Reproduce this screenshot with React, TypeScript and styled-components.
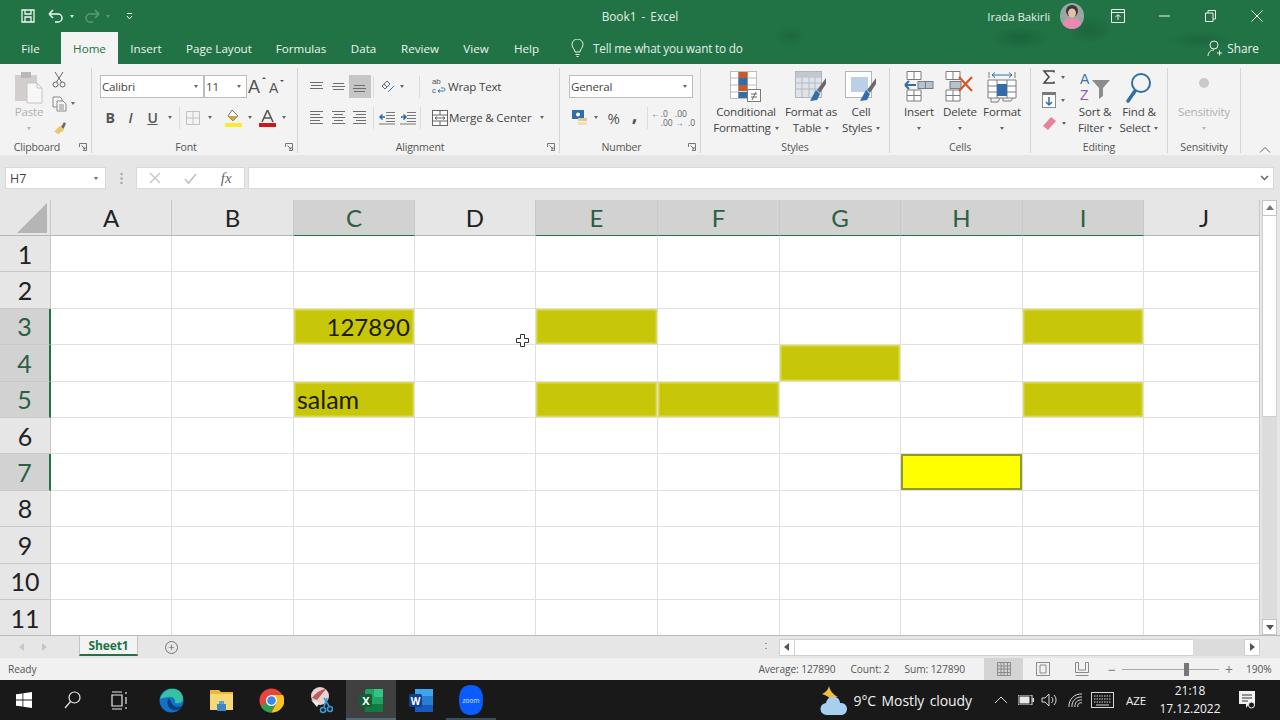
import React from 'react';
import styled, { createGlobalStyle } from 'styled-components';

const ui = `"Open Sans", "Noto Sans", sans-serif`;

const GlobalStyle = createGlobalStyle`
  html, body {
    margin: 0;
    padding: 0;
    background: #e6e6e6;
    font-family: ${ui};
  }
  * { box-sizing: border-box; }
`;

const Window = styled.div`
  width: 1280px;
  height: 720px;
  overflow: hidden;
  display: flex;
  flex-direction: column;
`;

// Title bar and tabs
const Head = styled.header`
  height: 64px;
  flex: none;
  background-color: #217346;
  background-image:
    radial-gradient(ellipse 30px 12px at 1020px 38px, rgba(20, 80, 45, .45), transparent),
    radial-gradient(ellipse 24px 14px at 1090px 30px, rgba(20, 80, 45, .4), transparent),
    radial-gradient(ellipse 34px 10px at 1200px 40px, rgba(20, 80, 45, .35), transparent),
    radial-gradient(ellipse 18px 12px at 790px 36px, rgba(20, 80, 45, .3), transparent);
`;

const TitleRow = styled.div`
  height: 32px;
  display: grid;
  grid-template-columns: 1fr auto 1fr;
  align-items: center;
  color: #e4eee8;
`;

const Qat = styled.div`
  display: flex;
  align-items: center;
  padding-left: 20px;
`;

const DocTitle = styled.div`
  font-size: 11.8px;
  word-spacing: 2px;
`;

const Account = styled.div`
  display: flex;
  align-items: center;
  justify-content: flex-end;
  font-size: 11.5px;
`;

const UserName = styled.span`
  margin-right: 10px;
  letter-spacing: -.1px;
`;

const TabRow = styled.nav`
  height: 32px;
  display: flex;
  align-items: stretch;
`;

const Tab = styled.div<{ $w: number; $active?: boolean }>`
  width: ${p => p.$w}px;
  display: flex;
  align-items: center;
  justify-content: center;
  font-size: 11.6px;
  color: ${p => (p.$active ? '#217346' : '#eef4f0')};
  background: ${p => (p.$active ? '#f3f3f3' : 'transparent')};
`;

const TellMe = styled.div`
  display: flex;
  align-items: center;
  gap: 9px;
  margin-left: 19px;
  font-size: 11.8px;
  letter-spacing: -.2px;
  color: #e4eee8;
`;

const Share = styled.div`
  margin-left: auto;
  padding-right: 21px;
  display: flex;
  align-items: center;
  gap: 5px;
  font-size: 11.8px;
  color: #eef4f0;
`;

// Ribbon
const Ribbon = styled.section`
  height: 91px;
  flex: none;
  padding-top: 4px;
  display: flex;
  background: #f3f3f3;
  color: #444;
  font-size: 11.6px;
  letter-spacing: -.2px;
`;

const Group = styled.div<{ $w: number }>`
  width: ${p => p.$w}px;
  height: 85px;
  display: flex;
  flex-direction: column;
  border-right: 1px solid #d6d6d6;
`;

const GroupBody = styled.div<{ $pl?: number; $row?: boolean }>`
  height: 73px;
  padding-left: ${p => p.$pl ?? 0}px;
  display: flex;
  flex-direction: ${p => (p.$row ? 'row' : 'column')};
`;

const GroupFoot = styled.div`
  height: 12px;
  display: flex;
  align-items: center;
  font-size: 10.6px;
  color: #555;
`;

const GroupName = styled.span`
  flex: 1;
  text-align: center;
`;

const Launcher = styled.span`
  width: 17px;
  display: flex;
  justify-content: center;
`;

const Rows = styled.div`
  padding-top: 7px;
  display: flex;
  flex-direction: column;
  gap: 8px;
`;

const ClipTools = styled.div`
  margin-left: 2px;
  padding-top: 2px;
  display: flex;
  flex-direction: column;
  gap: 5px;
`;

const ClipTool = styled.div`
  height: 19px;
  display: flex;
  align-items: center;
  padding-left: 4px;
  gap: 4px;
`;

const ToolRow = styled.div`
  height: 23px;
  display: flex;
  align-items: center;
`;

const Slot = styled.span<{ $w: number; $ml?: number; $on?: boolean }>`
  width: ${p => p.$w}px;
  height: 23px;
  margin-left: ${p => p.$ml ?? 0}px;
  flex: none;
  display: flex;
  align-items: center;
  justify-content: center;
  background: ${p => (p.$on ? '#c6c6c6' : 'transparent')};
`;

const Caret = styled.i<{ $faded?: boolean; $color?: string }>`
  display: inline-block;
  width: 0;
  height: 0;
  border-left: 2.5px solid transparent;
  border-right: 2.5px solid transparent;
  border-top: 3px solid ${p => p.$color ?? (p.$faded ? '#b5b5b5' : '#666')};
`;

const VSep = styled.span<{ $ml: number; $mr: number }>`
  width: 1px;
  height: 22px;
  flex: none;
  margin: 0 ${p => p.$mr}px 0 ${p => p.$ml}px;
  background: #dcdcdc;
`;

const Combo = styled.div<{ $w: number }>`
  width: ${p => p.$w}px;
  height: 23px;
  padding: 0 5px 0 1px;
  display: flex;
  align-items: center;
  justify-content: space-between;
  flex: none;
  background: #fff;
  border: 1px solid #bdbdbd;
  font-size: 11.6px;
  color: #444;
`;

const TextTool = styled.span<{ $ml?: number }>`
  margin-left: ${p => p.$ml ?? 0}px;
  white-space: nowrap;
  font-size: 11.6px;
`;

const FormatLetter = styled.span<{ $italic?: boolean; $under?: boolean; $bold?: boolean }>`
  font-size: 14px;
  font-weight: ${p => (p.$bold ? 700 : 600)};
  font-style: ${p => (p.$italic ? 'italic' : 'normal')};
  text-decoration: ${p => (p.$under ? 'underline' : 'none')};
  color: #555;
`;

const Percent = styled.span`
  font-size: 15px;
  color: #555;
`;

const Comma = styled.span`
  margin-top: -7px;
  font-size: 20px;
  font-weight: 700;
  line-height: 12px;
  color: #555;
`;

const Decimals = styled.span`
  display: grid;
  grid-template-columns: auto auto;
  column-gap: 1px;
  font-size: 8.5px;
  line-height: 9px;
  letter-spacing: 0;
  color: #666;
`;

const Blue = styled.b`
  font-weight: 400;
  color: #3f74ab;
`;

const Big = styled.div<{ $w: number; $ml?: number; $faded?: boolean }>`
  width: ${p => p.$w}px;
  margin-left: ${p => p.$ml ?? 0}px;
  flex: none;
  padding-top: 3px;
  display: flex;
  flex-direction: column;
  align-items: center;
  color: ${p => (p.$faded ? '#b0b0b0' : '#444')};
`;

const BigIcon = styled.div`
  height: 33px;
  display: flex;
  align-items: flex-start;
  justify-content: center;
`;

const BigLine = styled.div`
  height: 16px;
  line-height: 16px;
  white-space: nowrap;
  display: flex;
  align-items: center;
  gap: 4px;
`;

const EditCol = styled.div`
  width: 33px;
  display: flex;
  flex-direction: column;
  gap: 5px;
`;

const EditTool = styled.div`
  height: 18px;
  display: flex;
  align-items: center;
  padding-left: 3px;
  gap: 5px;
`;

const Collapse = styled.div`
  align-self: flex-end;
  margin: 0 0 -1px 18px;
`;

// Formula bar
const FormulaBar = styled.div`
  height: 45px;
  flex: none;
  padding: 12px 6px 11px 5px;
  display: flex;
  background: #e6e6e6;
  font-size: 12px;
  color: #444;
`;

const NameBox = styled.div`
  width: 101px;
  padding: 0 7px 0 4px;
  display: flex;
  align-items: center;
  justify-content: space-between;
  background: #fff;
  border: 1px solid #d9d9d9;
  font-size: 12.4px;
`;

const Grip = styled.div`
  width: 30px;
  display: flex;
  align-items: center;
  justify-content: center;
`;

const FxBox = styled.div`
  width: 109px;
  display: flex;
  align-items: center;
  background: #fff;
  border: 1px solid #d9d9d9;
`;

const FxSlot = styled.span`
  width: 36px;
  display: flex;
  justify-content: center;
`;

const Fx = styled.span`
  font-family: "Liberation Serif", serif;
  font-style: italic;
  font-size: 15px;
  color: #666;
`;

const FormulaInput = styled.div`
  flex: 1;
  margin-left: 3px;
  padding-right: 4px;
  display: flex;
  align-items: center;
  justify-content: flex-end;
  background: #fff;
  border: 1px solid #d9d9d9;
`;

// Sheet
const SheetArea = styled.main`
  position: relative;
  height: 436px;
  flex: none;
  display: flex;
  background: #e6e6e6;
  border-bottom: 1px solid #b9b9b9;
`;

const Cells = styled.div`
  width: 1260px;
  flex: none;
  display: grid;
  grid-template-columns: 51px 121px 122px 121px 121px 122px 122px 121px 122px 121px 121px;
  grid-template-rows: 36px repeat(11, 36.4px);
  overflow: hidden;
  border-right: 1px solid #c8c8c8;
  font-family: Lato, "Liberation Sans", sans-serif;
`;

const Corner = styled.div`
  position: relative;
  background: #e6e6e6;
  border-right: 1px solid #c8c8c8;
  border-bottom: 1px solid #b5b5b5;
  &::after {
    content: '';
    position: absolute;
    right: 3px;
    bottom: 2px;
    width: 0;
    height: 0;
    border-left: 30px solid transparent;
    border-bottom: 30px solid #b5b5b5;
  }
`;

const ColHead = styled.div<{ $on?: boolean }>`
  display: flex;
  align-items: center;
  justify-content: center;
  font-size: 24px;
  color: ${p => (p.$on ? '#2b5f43' : '#222')};
  background: ${p => (p.$on ? '#d2d2d2' : '#e6e6e6')};
  border-right: 1px solid #c8c8c8;
  border-bottom: 1px solid ${p => (p.$on ? '#217346' : '#b5b5b5')};
`;

const RowHead = styled.div<{ $on?: boolean }>`
  display: flex;
  align-items: center;
  justify-content: center;
  font-size: 25px;
  color: ${p => (p.$on ? '#2b5f43' : '#222')};
  background: ${p => (p.$on ? '#d2d2d2' : '#e6e6e6')};
  border-right: ${p => (p.$on ? '2px solid #217346' : '1px solid #c8c8c8')};
  border-bottom: 1px solid #c8c8c8;
`;

const Cell = styled.div<{ $fill?: boolean; $active?: boolean; $right?: boolean }>`
  display: flex;
  align-items: center;
  justify-content: ${p => (p.$right ? 'flex-end' : 'flex-start')};
  padding: ${p => (p.$right ? '1px 4px 0 4px' : '0 4px 1px 3px')};
  font-size: ${p => (p.$right ? 24 : 25)}px;
  color: #1b1b00;
  background: ${p => (p.$active ? '#ffff00' : p.$fill ? '#c8c608' : '#fff')};
  border-right: 1px solid #e0e0e0;
  border-bottom: 1px solid #e0e0e0;
  box-shadow: ${p =>
    p.$active
      ? 'inset 0 0 0 2px #8c9a2c'
      : p.$fill
        ? 'inset 0 0 0 1.5px #dcdc50'
        : 'none'};
`;

const VScroll = styled.div`
  flex: 1;
  padding: 0 3px 0 2px;
  display: flex;
  flex-direction: column;
`;

const ScrollBtn = styled.div`
  height: 16px;
  flex: none;
  display: flex;
  align-items: center;
  justify-content: center;
  background: #fff;
  border: 1px solid #c4c4c4;
`;

const VThumb = styled.div`
  height: 201px;
  flex: none;
  background: #fff;
  border: 1px solid #cfcfcf;
  border-top: 0;
`;

const VTrack = styled.div`
  flex: 1;
  background: #dcdcdc;
`;

const CellCursor = styled.span`
  position: absolute;
  left: 516px;
  top: 134px;
  display: flex;
`;

// Sheet tabs
const TabsBar = styled.div`
  height: 22px;
  flex: none;
  display: flex;
  align-items: center;
  background: #e6e6e6;
`;

const SheetNav = styled.div`
  width: 79px;
  padding-left: 18px;
  display: flex;
  gap: 14px;
`;

const SheetTab = styled.div`
  width: 59px;
  height: 20px;
  margin-top: -2px;
  display: flex;
  align-items: center;
  justify-content: center;
  background: #f3f3f3;
  border-left: 1px solid #c4c4c4;
  border-right: 1px solid #c4c4c4;
  border-bottom: 2px solid #217346;
  font-size: 12px;
  font-weight: 700;
  letter-spacing: -.1px;
  color: #217346;
`;

const AddSheet = styled.div`
  width: 13px;
  height: 13px;
  margin-left: 27px;
  border: 1px solid #777;
  border-radius: 50%;
  display: flex;
  align-items: center;
  justify-content: center;
  font-size: 11px;
  line-height: 10px;
  color: #666;
`;

const HScroll = styled.div`
  margin-left: auto;
  margin-right: 20px;
  display: flex;
  align-items: center;
`;

const Dots = styled.div`
  width: 2px;
  height: 12px;
  margin-right: 12px;
  background: radial-gradient(circle, #9a9a9a 1px, transparent 1.1px) 0 0 / 2px 5px;
`;

const HBtn = styled.div`
  width: 16px;
  height: 17px;
  display: flex;
  align-items: center;
  justify-content: center;
  background: #fff;
  border: 1px solid #cfcfcf;
`;

const HThumb = styled.div`
  width: 398px;
  height: 17px;
  background: #fff;
  border-top: 1px solid #cfcfcf;
  border-bottom: 1px solid #cfcfcf;
`;

const HTrack = styled.div`
  width: 51px;
  height: 17px;
  background: #dcdcdc;
`;

// Status bar
const StatusBar = styled.footer`
  height: 22px;
  flex: none;
  padding-left: 8px;
  display: flex;
  align-items: center;
  background: #f1f1f1;
  font-size: 10.2px;
  letter-spacing: -.1px;
  color: #555;
`;

const Stats = styled.div`
  margin-left: auto;
  display: flex;
  gap: 15px;
`;

const ViewBtn = styled.div<{ $on?: boolean; $ml?: number; $mr?: number }>`
  width: 39px;
  height: 22px;
  margin-left: ${p => p.$ml ?? 0}px;
  margin-right: ${p => p.$mr ?? 0}px;
  display: flex;
  align-items: center;
  justify-content: center;
  background: ${p => (p.$on ? '#d4d4d4' : 'transparent')};
`;

const ZoomBar = styled.div`
  position: relative;
  width: 97px;
  height: 1px;
  margin: 0 5px;
  background: #a8a8a8;
`;

const ZoomThumb = styled.span`
  position: absolute;
  left: 62px;
  top: -6px;
  width: 5px;
  height: 13px;
  background: #777;
`;

const ZoomSign = styled.span`
  width: 10px;
  text-align: center;
  font-size: 14px;
  color: #777;
`;

const ZoomValue = styled.span`
  margin-left: 12px;
  width: 34px;
`;

// Taskbar
const Taskbar = styled.div`
  height: 40px;
  flex: none;
  display: flex;
  align-items: stretch;
  background: #191919;
  color: #f2f2f2;
`;

const TaskBtn = styled.div<{ $w: number; $ml?: number; $active?: boolean; $open?: boolean }>`
  width: ${p => p.$w}px;
  margin-left: ${p => p.$ml ?? 0}px;
  flex: none;
  display: flex;
  align-items: center;
  justify-content: center;
  background: ${p => (p.$active ? '#404040' : 'transparent')};
  box-shadow: ${p => (p.$open ? 'inset 0 -2px 0 #76b9ed55' : 'none')};
`;

const Tray = styled.div`
  margin-left: auto;
  display: flex;
  align-items: center;
`;

const Weather = styled.span`
  margin: 0 17px 0 5px;
  font-size: 14px;
  letter-spacing: -.1px;
  word-spacing: 2px;
`;

const TraySlot = styled.span<{ $w: number }>`
  width: ${p => p.$w}px;
  display: flex;
  justify-content: center;
`;

const Lang = styled.span`
  width: 34px;
  margin-left: 5px;
  text-align: center;
  font-size: 11.5px;
`;

const Clock = styled.div`
  width: 74px;
  display: flex;
  flex-direction: column;
  align-items: center;
  gap: 3px;
  font-size: 12px;
  line-height: 15px;
  margin-top: -2px;
`;

const Notice = styled.span`
  width: 40px;
  margin-right: 13px;
  display: flex;
  justify-content: center;
`;

// Ribbon drawings
const iconFont = '"Liberation Sans", sans-serif';

const Launch = () => (
  <svg width="8" height="8" viewBox="0 0 8 8" fill="none" stroke="#777">
    <path d="M.5 4V.5H7.5V7.5H4M2.5 2.5L6 6M6 4V6H4" />
  </svg>
);

const Lines = ({ rows, w = 14 }: { rows: [number, number, number][]; w?: number }) => (
  <svg width={w} height="16" viewBox={`0 0 ${w} 16`} stroke="#6e6e6e">
    {rows.map(([y, a, b]) => (
      <path key={y} d={`M${a} ${y + 0.5}H${b}`} />
    ))}
  </svg>
);

const PasteIcon = () => (
  <svg width="30" height="33" viewBox="0 0 30 33">
    <rect x="1" y="4" width="22" height="26" rx="1" fill="#d2cece" />
    <rect x="7" y="1" width="10" height="6" fill="#bdb8b8" />
    <path d="M13 12h10l5 5v15H13z" fill="#f7f7f7" stroke="#c4c4c4" />
    <path d="M23 12v5h5" fill="none" stroke="#c4c4c4" />
  </svg>
);

const ScissorIcon = () => (
  <svg width="14" height="17" viewBox="0 0 14 17" fill="none" stroke="#666">
    <circle cx="3.5" cy="13.5" r="2.5" />
    <circle cx="10.5" cy="13.5" r="2.5" />
    <path d="M4.5 11L11 1M9.5 11L3 1" />
  </svg>
);

const CopyIcon = () => (
  <svg width="15" height="16" viewBox="0 0 15 16" fill="#f8f8f8" stroke="#8a8a8a">
    <path d="M1 1h7l2 2v8H1z" />
    <path d="M5 5h6l3 3v7H5z" />
    <path d="M7 9h5M7 11h5M7 13h5" />
  </svg>
);

const BrushIcon = () => (
  <svg width="16" height="16" viewBox="0 0 16 16">
    <path d="M9 7l3-5 2 1.5L11.5 9z" fill="#7a6a55" />
    <path d="M8 6l4 4-2 2-1-.5L7 14l-2-.5L2 11l2.5-1L4.5 9z" fill="#e8c66a" />
  </svg>
);

const GrowA = ({ size, mark }: { size: number; mark: string }) => (
  <svg width="21" height="26" viewBox="0 0 21 26">
    <text x="1" y="19" fontSize={size} fontFamily={iconFont} fill="#555">A</text>
    <path d={mark} fill="#555" />
  </svg>
);

const BorderIcon = () => (
  <svg width="14" height="14" viewBox="0 0 14 14" fill="none" stroke="#c2c2c2">
    <path d="M.5.5h13v13H.5zM7 .5v13M.5 7h13" />
  </svg>
);

const FillIcon = () => (
  <svg width="17" height="18" viewBox="0 0 17 18">
    <path d="M7 1l6 6-5 5-5-5z" fill="#fff" stroke="#777" />
    <path d="M3 7h10l-5 5z" fill="#d4a23e" />
    <rect x="0" y="14" width="17" height="4" fill="#f6ee2b" />
  </svg>
);

const ColorIcon = () => (
  <svg width="17" height="18" viewBox="0 0 17 18">
    <path d="M8.5 1L3 13M8.5 1L14 13M5.3 9h6.5" fill="none" stroke="#555" strokeWidth="1.6" />
    <rect x="0" y="14" width="17" height="4" fill="#d01818" />
  </svg>
);

const OrientIcon = () => (
  <svg width="14" height="14" viewBox="0 0 14 14" fill="none" stroke="#666">
    <path d="M1 6l5-5 3 3-5 5zM3 4l3 3" />
    <path d="M7 12l6-6" stroke="#3f74ab" />
  </svg>
);

const WrapIcon = () => (
  <svg width="18" height="23" viewBox="0 0 18 23">
    <text x="2" y="9" fontSize="8" fontFamily={iconFont} fill="#555">ab</text>
    <text x="2" y="18.400" fontSize="8" fontFamily={iconFont} fill="#555">c</text>
    <path d="M8 16h5.500a1.500 1.500 0 0 0 0-3H11M8 16l2-1.500M8 16l2 1.500" fill="none" stroke="#3f74ab" />
  </svg>
);

const IndentIcon = ({ flip }: { flip?: boolean }) => (
  <svg width="16" height="14" viewBox="0 0 16 14" fill="none">
    <path d="M7 1.500h9M7 4.500h9M7 7.500h9M7 10.500h9M0 13h16" stroke="#777" />
    <path d={flip ? 'M1 6h4M3.500 3.500L6 6 3.500 8.500' : 'M1 6h5M3.500 3.500L1 6l2.500 2.500'} stroke="#2d65a5" strokeWidth="1.5" />
  </svg>
);

const MergeIcon = () => (
  <svg width="16" height="16" viewBox="0 0 16 16" fill="#fff" stroke="#666">
    <rect x=".5" y=".5" width="15" height="15" />
    <path d="M.5 5h15M.5 11h15M8 .5V5M8 11v4.500" />
    <path d="M3 8h10M3 8l2-1.500M3 8l2 1.500M13 8l-2-1.500M13 8l-2 1.500" />
  </svg>
);

const AccountingIcon = () => (
  <svg width="17" height="17" viewBox="0 0 17 17">
    <rect x="1" y="1" width="12" height="9" fill="#2f6ea8" />
    <circle cx="7" cy="5.500" r="2" fill="#fff" />
    <rect x="7" y="9" width="9" height="3" fill="#e2c98a" />
    <rect x="7" y="13" width="9" height="3" fill="#efe0b8" />
  </svg>
);

const CondIcon = () => (
  <svg width="32" height="31" viewBox="0 0 32 31">
    <g fill="#fff" stroke="#bcbcbc">
      <rect x=".5" y=".5" width="8" height="27" />
      <rect x="8.500" y=".5" width="9" height="27" />
      <rect x="17.500" y=".5" width="9" height="27" />
    </g>
    <path d="M.5 7h26M.5 14h26M.5 21h26" stroke="#bcbcbc" />
    <rect x="8.500" y="1" width="9" height="6" fill="#c9582c" />
    <rect x="8.500" y="7" width="9" height="7" fill="#2f6ea8" />
    <rect x="8.500" y="14" width="9" height="6" fill="#c9582c" />
    <rect x="8.500" y="21" width="9" height="6" fill="#2f6ea8" />
    <rect x="17.500" y="18.500" width="13" height="12" fill="#fff" stroke="#7a7a7a" />
    <path d="M21 23h6M21 26h6M26 21l-4 8" stroke="#666" fill="none" />
  </svg>
);

const TableIcon = () => (
  <svg width="32" height="31" viewBox="0 0 32 31">
    <rect x=".5" y=".5" width="26" height="26" fill="#dfe3ea" stroke="#b5b5b5" />
    <path d="M.5 6h26M.5 12h26M.5 18h26M7 .5v26M14 .5v26M20 .5v26" stroke="#b5bac4" />
    <rect x="1" y="1" width="25" height="5" fill="#c2c8d2" />
    <path d="M31 7l-9 12 3 3 6-9z" fill="#6a6a6a" />
    <path d="M21 19l4 4-3 6-7 1z" fill="#2f6ea8" />
  </svg>
);

const CellStyleIcon = () => (
  <svg width="32" height="31" viewBox="0 0 32 31">
    <rect x=".5" y=".5" width="26" height="26" fill="#fff" stroke="#b5b5b5" />
    <rect x="6" y="6" width="17" height="15" fill="#b9d0e6" />
    <path d="M31 7l-9 12 3 3 6-9z" fill="#6a6a6a" />
    <path d="M21 19l4 4-3 6-7 1z" fill="#2f6ea8" />
  </svg>
);

const InsertIcon = () => (
  <svg width="30" height="31" viewBox="0 0 30 31" fill="#fff" stroke="#7c7c7c">
    <path d="M3 .5h14v8H3zM10 .5v8M3 19h14v11H3zM3 24.500h14M10 19v11" />
    <rect x="14" y="10.500" width="15" height="7" fill="#b7c2cf" />
    <path d="M21.500 10.500v7" />
    <path d="M1 14h11M1 14l4-4M1 14l4 4" fill="none" stroke="#2f6ea8" strokeWidth="2" />
  </svg>
);

const DeleteIcon = () => (
  <svg width="30" height="31" viewBox="0 0 30 31" fill="#fff" stroke="#7c7c7c">
    <path d="M1 .5h14v8H1zM8 .5v8M1 19h14v11H1zM1 24.500h14M8 19v11" />
    <rect x="5" y="10.500" width="11" height="7" fill="#b7c2cf" />
    <path d="M14 6l13 14M27 6L14 20" stroke="#d4562a" strokeWidth="2.200" fill="none" />
  </svg>
);

const FormatCellIcon = () => (
  <svg width="30" height="33" viewBox="0 0 30 33" fill="#fff" stroke="#7c7c7c">
    <path d="M2 1v6M28 1v6" fill="none" />
    <path d="M5 4h20M5 4l3-2.500M5 4l3 2.500M25 4l-3-2.500M25 4l-3 2.500" fill="none" stroke="#2f6ea8" />
    <path d="M1 9h28v18H1zM10 9v18M20 9v18M1 15h28M1 21h28" />
    <rect x="10" y="13" width="10" height="12" fill="#2f6ea8" stroke="none" />
    <path d="M4 27v4h7l2-4M16 27v3h8l2-3" fill="none" />
  </svg>
);

const SumIcon = () => (
  <svg width="14" height="14" viewBox="0 0 14 14" fill="none" stroke="#444" strokeWidth="1.500">
    <path d="M12 2.500V1H2l5 6-5 6h10v-1.500" />
  </svg>
);

const FillDownIcon = () => (
  <svg width="14" height="16" viewBox="0 0 14 16">
    <rect x=".5" y=".5" width="13" height="15" fill="#fff" stroke="#8a8a8a" />
    <rect x="0" y="0" width="14" height="3" fill="#7a7a7a" />
    <path d="M7 5v8M4 10l3 3 3-3" fill="none" stroke="#2f6ea8" strokeWidth="1.500" />
  </svg>
);

const EraserIcon = () => (
  <svg width="15" height="15" viewBox="0 0 15 15">
    <path d="M9 1l5 4-8 9-5-4z" fill="#e8829a" />
  </svg>
);

const SortIcon = () => (
  <svg width="34" height="33" viewBox="0 0 34 33">
    <text x="2" y="13" fontSize="14" fontFamily={iconFont} fill="#3f74ab">A</text>
    <text x="2" y="29.200" fontSize="14" fontFamily={iconFont} fill="#8a5fa8">Z</text>
    <path d="M14 9h18l-7 8v8l-4 3V17z" fill="#8c8c8c" />
  </svg>
);

const FindIcon = () => (
  <svg width="28" height="33" viewBox="0 0 28 33" fill="none" stroke="#2f6ea8">
    <circle cx="16" cy="12" r="9" strokeWidth="2" />
    <path d="M10 20L3 30" strokeWidth="3.500" strokeLinecap="round" />
  </svg>
);

// Title bar drawings
const SaveIcon = () => (
  <svg width="16" height="16" viewBox="0 0 16 16" fill="none" stroke="#f2f6f4" strokeWidth="1.300">
    <path d="M2 2h12v12H2zM5 2v4h6V2M5 14V9h6v5" />
  </svg>
);

const UndoGlyph = styled.svg<{ $faded?: boolean }>`
  fill: none;
  stroke: ${p => (p.$faded ? '#5d9a78' : '#f2f6f4')};
  stroke-width: 1.5;
  transform: ${p => (p.$faded ? 'scaleX(-1)' : 'none')};
`;

const UndoIcon = ({ faded }: { faded?: boolean }) => (
  <UndoGlyph $faded={faded} width="16" height="14" viewBox="0 0 16 14">
    <path d="M1 5h9a4 4 0 0 1 0 8H7M1 5l4-4M1 5l4 4" />
  </UndoGlyph>
);

const Avatar = () => (
  <svg width="24" height="26" viewBox="0 0 24 26">
    <clipPath id="face"><ellipse cx="12" cy="13" rx="12" ry="13" /></clipPath>
    <g clipPath="url(#face)">
      <rect width="24" height="26" fill="#9aa7a0" />
      <ellipse cx="12" cy="8" rx="6" ry="6" fill="#3a3438" />
      <ellipse cx="12" cy="10" rx="4" ry="4.500" fill="#e6bfa8" />
      <path d="M2 26c0-8 4-11 10-11s10 3 10 11z" fill="#e88ab0" />
    </g>
  </svg>
);

const WhiteStroke = styled.svg`
  display: block;
  margin: 0;
  fill: none;
  stroke: #eef4f0;
`;

const WinBtn = styled.span<{ $w: number; $ml?: number }>`
  width: ${p => p.$w}px;
  margin-left: ${p => p.$ml ?? 0}px;
  display: flex;
  justify-content: center;
`;

// Taskbar drawings
const WinLogo = () => (
  <svg width="16" height="16" viewBox="0 0 16 16" fill="#fff">
    <path d="M0 2.300L6.500 1.400V7.600H0zM7.300 1.300L16 0V7.600H7.300zM0 8.400H6.500V14.600L0 13.700zM7.300 8.400H16V16L7.300 14.700z" />
  </svg>
);

const SearchIcon = () => (
  <svg width="17" height="18" viewBox="0 0 17 18" fill="none" stroke="#e8e8e8" strokeWidth="1.200">
    <circle cx="10.500" cy="6.500" r="5.500" />
    <path d="M6.500 10.500L1 17" />
  </svg>
);

const TaskViewIcon = () => (
  <svg width="18" height="19" viewBox="0 0 18 19" fill="none" stroke="#e8e8e8" strokeWidth="1.200">
    <path d="M1 1h10M1 18h10M1 4h10v11H1zM15 1v2M15 6v7M15 16v2" />
  </svg>
);

const EdgeIcon = () => (
  <svg width="25" height="25" viewBox="0 0 25 25">
    <circle cx="12.500" cy="12.500" r="12" fill="#1273c4" />
    <path d="M1 11C3 3 11 0 16 1c5 1 8 5 8 10 0 4-5 5-8 4 1-3-1-6-5-6-4 0-8 1-10 2z" fill="#35c1a2" />
    <path d="M10 10c-3 3-2 10 4 12 4 1 8-1 10-5-2 2-7 3-10 0-2-2-3-5-4-7z" fill="#0b3e83" />
  </svg>
);

const FolderIcon = () => (
  <svg width="23" height="22" viewBox="0 0 23 22">
    <path d="M0 1h9l2 2h12v18H0z" fill="#e9b93d" />
    <rect x="0" y="5" width="23" height="16" fill="#f8d775" />
    <rect x="7" y="15" width="9" height="7" fill="#3b87c4" />
    <rect x="9" y="12" width="5" height="3" fill="#5aa5d8" />
  </svg>
);

const ChromeIcon = () => (
  <svg width="25" height="25" viewBox="0 0 25 25">
    <circle cx="12.500" cy="12.500" r="12" fill="#e8453c" />
    <path d="M12.500 12.500L2.200 18.500A12 12 0 0 0 12 24.500z" fill="#2f9e4f" />
    <path d="M12.500 7H24a12 12 0 0 1-11.500 17.500L18 14z" fill="#f9c31f" />
    <path d="M12.500 12.500L7 14 2.200 18.500A12 12 0 0 0 12 24.500L17 16z" fill="#2f9e4f" />
    <circle cx="12.500" cy="12.500" r="5.500" fill="#fff" />
    <circle cx="12.500" cy="12.500" r="4.300" fill="#3f87e8" />
  </svg>
);

const SnipIcon = () => (
  <svg width="24" height="28" viewBox="0 0 24 28">
    <ellipse cx="11" cy="10" rx="9" ry="9" fill="#e6d4d2" />
    <path d="M3 12c5-7 11-9 14-9l-9 11z" fill="#c25a5a" />
    <path d="M2 14l8 3-2 4z" fill="#f1f1f1" />
    <g fill="none" stroke="#3a9ad9" strokeWidth="1.600">
      <circle cx="14" cy="24" r="2.500" />
      <circle cx="21" cy="23" r="2.500" />
      <path d="M15 21l3-9M20 20l-5-8" />
    </g>
  </svg>
);

const ExcelIcon = () => (
  <svg width="25" height="25" viewBox="0 0 25 25">
    <rect x="6" y="1" width="18" height="23" rx="2" fill="#21a366" />
    <rect x="15" y="1" width="9" height="8" fill="#33c481" />
    <rect x="6" y="16" width="18" height="8" fill="#107c41" />
    <rect x="0" y="6" width="13" height="13" rx="1.500" fill="#185c37" />
    <text x="3.200" y="16.500" fontSize="11" fontWeight="700" fontFamily="Open Sans" fill="#fff">X</text>
  </svg>
);

const WordIcon = () => (
  <svg width="25" height="25" viewBox="0 0 25 25">
    <rect x="6" y="1" width="18" height="23" rx="2" fill="#2b7cd3" />
    <rect x="6" y="1" width="18" height="7" fill="#41a5ee" />
    <rect x="6" y="17" width="18" height="7" fill="#185abd" />
    <rect x="0" y="6" width="13" height="13" rx="1.500" fill="#103f91" />
    <text x="1.800" y="16.500" fontSize="10" fontWeight="700" fontFamily="Open Sans" fill="#fff">W</text>
  </svg>
);

const ZoomIcon = () => (
  <svg width="24" height="30" viewBox="0 0 24 30">
    <path d="M12 0c8 0 12 5 12 15s-4 15-12 15S0 25 0 15 4 0 12 0z" fill="#0b5cff" />
    <text x="12" y="17.500" textAnchor="middle" fontSize="6.500" fontFamily="Open Sans" fill="#dfe9ff">zoom</text>
  </svg>
);

const CloudIcon = () => (
  <svg width="29" height="31" viewBox="0 0 29 31">
    <path d="M9 1c-1 4-3 6-7 8 4 1 7 3 9 6 3-2 5-3 7-3C14 10 10 6 9 1z" fill="#f4bb3a" />
    <path d="M7 30a6 6 0 0 1-1-12c1-5 5-7 9-6 4 1 5 4 5 6a6 6 0 0 1 2 12z" fill="#a9cff0" />
  </svg>
);

const TrayGlyph = ({ d, w = 18 }: { d: string; w?: number }) => (
  <svg width={w} height="16" viewBox={`0 0 ${w} 16`} fill="none" stroke="#d8d8d8">
    <path d={d} />
  </svg>
);

const KeyboardIcon = () => (
  <svg width="23" height="16" viewBox="0 0 23 16" fill="none" stroke="#d8d8d8">
    <rect x=".5" y=".5" width="22" height="15" />
    <path d="M3 4h17M3 7h17M3 10h17" strokeDasharray="1.500 1" />
    <path d="M5 13h13" />
  </svg>
);

const NoticeIcon = () => (
  <svg width="18" height="20" viewBox="0 0 18 20">
    <path d="M1 1h16v13h-6l-3 4v-4H1z" fill="#f2f2f2" />
    <path d="M4 5h10M4 8h10M4 11h6" stroke="#333" />
    <circle cx="13.500" cy="15" r="3" fill="#191919" stroke="#f2f2f2" />
  </svg>
);

const columns = ['A', 'B', 'C', 'D', 'E', 'F', 'G', 'H', 'I', 'J'];
const selectedCols = 'CEFGHI';
const selectedRows = [3, 4, 5, 7];
const filled = ['C3', 'E3', 'I3', 'G4', 'C5', 'E5', 'F5', 'I5'];
const values: Record<string, string> = { C3: '127890', C5: 'salam' };
const rows = Array.from({ length: 11 }, (_, i) => i + 1);
const tabs: [string, number][] = [
  ['File', 61], ['Home', 57], ['Insert', 56], ['Page Layout', 90], ['Formulas', 74],
  ['Data', 51], ['Review', 62], ['View', 50], ['Help', 51],
];

const Sheet = () => (
  <Cells>
    <Corner />
    {columns.map(c => (
      <ColHead key={c} $on={selectedCols.includes(c)}>{c}</ColHead>
    ))}
    {rows.map(r => (
      <React.Fragment key={r}>
        <RowHead $on={selectedRows.includes(r)}>{r}</RowHead>
        {columns.map(c => {
          const id = c + r;
          return (
            <Cell key={id} $fill={filled.includes(id)} $active={id === 'H7'} $right={id === 'C3'}>
              {values[id]}
            </Cell>
          );
        })}
      </React.Fragment>
    ))}
  </Cells>
);

const Arrow = ({ dir, color = '#777' }: { dir: 'up' | 'down' | 'left' | 'right'; color?: string }) => {
  const d = { up: 'M0 6L4 1 8 6z', down: 'M0 2L4 7 8 2z', left: 'M6 0L1 4 6 8z', right: 'M2 0L7 4 2 8z' }[dir];
  return (
    <svg width="8" height="8" viewBox="0 0 8 8" fill={color}>
      <path d={d} />
    </svg>
  );
};

export default function App() {
  return (
    <Window>
      <GlobalStyle />
      <Head>
        <TitleRow>
          <Qat>
            <SaveIcon />
            <Slot $w={16} $ml={12}><UndoIcon /></Slot>
            <Slot $w={10} $ml={3}><Caret $color="#d9e6de" /></Slot>
            <Slot $w={18} $ml={6}><UndoIcon faded /></Slot>
            <Slot $w={10} $ml={2}><Caret $color="#5d9a78" /></Slot>
            <Slot $w={10} $ml={11}>
              <WhiteStroke width="7" height="9" viewBox="0 0 7 9"><path d="M1 1.500h5M1 4l2.500 3L6 4" /></WhiteStroke>
            </Slot>
          </Qat>
          <DocTitle>Book1 - Excel</DocTitle>
          <Account>
            <UserName>Irada Bakirli</UserName>
            <Avatar />
            <WinBtn $w={46} $ml={11}>
              <WhiteStroke width="14" height="14" viewBox="0 0 14 14">
                <path d="M.5.5h13v13H.5zM.5 3.500h13M7 11V6M4.500 8L7 5.500 9.500 8" />
              </WhiteStroke>
            </WinBtn>
            <WinBtn $w={46}>
              <WhiteStroke width="11" height="2" viewBox="0 0 11 2"><path d="M0 1h11" /></WhiteStroke>
            </WinBtn>
            <WinBtn $w={46}>
              <WhiteStroke width="11" height="12" viewBox="0 0 11 12"><path d="M.5 3h7.500v8.500H.5zM3 3V.5h7.500V9H8" /></WhiteStroke>
            </WinBtn>
            <WinBtn $w={47}>
              <WhiteStroke width="12" height="12" viewBox="0 0 12 12"><path d="M.5.5l11 11M11.500.5l-11 11" /></WhiteStroke>
            </WinBtn>
          </Account>
        </TitleRow>
        <TabRow>
          {tabs.map(([name, w]) => (
            <Tab key={name} $w={w} $active={name === 'Home'}>{name}</Tab>
          ))}
          <TellMe>
            <WhiteStroke width="13" height="18" viewBox="0 0 13 18">
              <path d="M4 13c0-3-3-4-3-7.500a5.500 5.500 0 0 1 11 0C12 9 9 10 9 13zM4.500 15.500h4M5.500 17.500h2" />
            </WhiteStroke>
            Tell me what you want to do
          </TellMe>
          <Share>
            <WhiteStroke width="15" height="17" viewBox="0 0 15 17">
              <circle cx="7" cy="5" r="4" />
              <path d="M1 16c0-3 2-6 6-6M10 13h5M12.500 10.500v5" />
            </WhiteStroke>
            Share
          </Share>
        </TabRow>
      </Head>

      <Ribbon>
        <Group $w={92}>
          <GroupBody $row $pl={12}>
            <Big $w={34} $faded>
              <BigIcon><PasteIcon /></BigIcon>
              <BigLine>Paste</BigLine>
              <BigLine><Caret $faded /></BigLine>
            </Big>
            <ClipTools>
              <ClipTool><ScissorIcon /></ClipTool>
              <ClipTool><CopyIcon /><Caret /></ClipTool>
              <ClipTool><BrushIcon /></ClipTool>
            </ClipTools>
          </GroupBody>
          <GroupFoot><GroupName>Clipboard</GroupName><Launcher><Launch /></Launcher></GroupFoot>
        </Group>

        <Group $w={206}>
          <GroupBody $pl={8}>
            <Rows>
              <ToolRow>
                <Combo $w={104}>Calibri<Caret /></Combo>
                <Combo $w={43}>11<Caret /></Combo>
                <Slot $w={21}><GrowA size={18} mark="M15 5l2-2 2 2z" /></Slot>
                <Slot $w={21}><GrowA size={14} mark="M12 6l2 2 2-2z" /></Slot>
              </ToolRow>
              <ToolRow>
                <Slot $w={20}><FormatLetter $bold>B</FormatLetter></Slot>
                <Slot $w={21}><FormatLetter $italic>I</FormatLetter></Slot>
                <Slot $w={23}><FormatLetter $under>U</FormatLetter></Slot>
                <Slot $w={12}><Caret /></Slot>
                <VSep $ml={3} $mr={3} />
                <Slot $w={20}><BorderIcon /></Slot>
                <Slot $w={12} $ml={1}><Caret /></Slot>
                <Slot $w={22} $ml={6}><FillIcon /></Slot>
                <Slot $w={12}><Caret /></Slot>
                <Slot $w={22}><ColorIcon /></Slot>
                <Slot $w={12}><Caret /></Slot>
              </ToolRow>
            </Rows>
          </GroupBody>
          <GroupFoot><GroupName>Font</GroupName><Launcher><Launch /></Launcher></GroupFoot>
        </Group>

        <Group $w={262}>
          <GroupBody $pl={8}>
            <Rows>
              <ToolRow>
                <Slot $w={22}><Lines rows={[[3, 0, 13], [6, 1, 12], [9, 0, 13]]} /></Slot>
                <Slot $w={21}><Lines rows={[[4, 1, 12], [7, 0, 13], [10, 1, 12]]} /></Slot>
                <Slot $w={22} $on><Lines rows={[[6, 1, 12], [9, 0, 13], [12, 1, 12]]} /></Slot>
                <VSep $ml={2} $mr={4} />
                <Slot $w={20}><OrientIcon /></Slot>
                <Slot $w={8}><Caret /></Slot>
                <VSep $ml={13} $mr={10} />
                <Slot $w={18}><WrapIcon /></Slot>
                <TextTool>Wrap Text</TextTool>
              </ToolRow>
              <ToolRow>
                <Slot $w={22}><Lines rows={[[1, 0, 13], [4, 0, 10], [7, 0, 13], [10, 0, 10], [13, 0, 13]]} /></Slot>
                <Slot $w={21}><Lines rows={[[1, 0, 13], [4, 2, 11], [7, 0, 13], [10, 2, 11], [13, 0, 13]]} /></Slot>
                <Slot $w={22}><Lines rows={[[1, 0, 13], [4, 3, 13], [7, 0, 13], [10, 3, 13], [13, 0, 13]]} /></Slot>
                <VSep $ml={2} $mr={3} />
                <Slot $w={20}><IndentIcon /></Slot>
                <Slot $w={20} $ml={1}><IndentIcon flip /></Slot>
                <VSep $ml={2} $mr={10} />
                <Slot $w={17}><MergeIcon /></Slot>
                <TextTool $ml={1}>Merge &amp; Center</TextTool>
                <Slot $w={8} $ml={7}><Caret /></Slot>
              </ToolRow>
            </Rows>
          </GroupBody>
          <GroupFoot><GroupName>Alignment</GroupName><Launcher><Launch /></Launcher></GroupFoot>
        </Group>

        <Group $w={141}>
          <GroupBody $pl={9}>
            <Rows>
              <ToolRow><Combo $w={124}>General<Caret /></Combo></ToolRow>
              <ToolRow>
                <Slot $w={20}><AccountingIcon /></Slot>
                <Slot $w={12} $ml={1}><Caret /></Slot>
                <Slot $w={21} $ml={1}><Percent>%</Percent></Slot>
                <Slot $w={21}><Comma>,</Comma></Slot>
                <VSep $ml={2} $mr={3} />
                <Slot $w={22}><Decimals><Blue>←</Blue><span>.0</span><span /><span>.00</span></Decimals></Slot>
                <Slot $w={22} $ml={1}><Decimals><span>.00</span><span /><Blue>→</Blue><span>.0</span></Decimals></Slot>
              </ToolRow>
            </Rows>
          </GroupBody>
          <GroupFoot><GroupName>Number</GroupName><Launcher><Launch /></Launcher></GroupFoot>
        </Group>

        <Group $w={189}>
          <GroupBody $row $pl={6}>
            <Big $w={78}>
              <BigIcon><CondIcon /></BigIcon>
              <BigLine>Conditional</BigLine>
              <BigLine>Formatting <Caret /></BigLine>
            </Big>
            <Big $w={52}>
              <BigIcon><TableIcon /></BigIcon>
              <BigLine>Format as</BigLine>
              <BigLine>Table <Caret /></BigLine>
            </Big>
            <Big $w={48}>
              <BigIcon><CellStyleIcon /></BigIcon>
              <BigLine>Cell</BigLine>
              <BigLine>Styles <Caret /></BigLine>
            </Big>
          </GroupBody>
          <GroupFoot><GroupName>Styles</GroupName></GroupFoot>
        </Group>

        <Group $w={141}>
          <GroupBody $row $pl={8}>
            <Big $w={42}>
              <BigIcon><InsertIcon /></BigIcon>
              <BigLine>Insert</BigLine>
              <BigLine><Caret /></BigLine>
            </Big>
            <Big $w={40}>
              <BigIcon><DeleteIcon /></BigIcon>
              <BigLine>Delete</BigLine>
              <BigLine><Caret /></BigLine>
            </Big>
            <Big $w={44}>
              <BigIcon><FormatCellIcon /></BigIcon>
              <BigLine>Format</BigLine>
              <BigLine><Caret /></BigLine>
            </Big>
          </GroupBody>
          <GroupFoot><GroupName>Cells</GroupName></GroupFoot>
        </Group>

        <Group $w={137}>
          <GroupBody $row $pl={8}>
            <EditCol>
              <EditTool><SumIcon /><Caret /></EditTool>
              <EditTool><FillDownIcon /><Caret /></EditTool>
              <EditTool><EraserIcon /><Caret /></EditTool>
            </EditCol>
            <Big $w={46}>
              <BigIcon><SortIcon /></BigIcon>
              <BigLine>Sort &amp;</BigLine>
              <BigLine>Filter <Caret /></BigLine>
            </Big>
            <Big $w={42}>
              <BigIcon><FindIcon /></BigIcon>
              <BigLine>Find &amp;</BigLine>
              <BigLine>Select <Caret /></BigLine>
            </Big>
          </GroupBody>
          <GroupFoot><GroupName>Editing</GroupName></GroupFoot>
        </Group>

        <Group $w={73}>
          <GroupBody $row>
            <Big $w={72} $faded>
              <BigIcon>
                <svg width="12" height="30" viewBox="0 0 12 30"><circle cx="6" cy="12" r="5" fill="#c9c9c9" /></svg>
              </BigIcon>
              <BigLine>Sensitivity</BigLine>
              <BigLine><Caret $faded /></BigLine>
            </Big>
          </GroupBody>
          <GroupFoot><GroupName>Sensitivity</GroupName></GroupFoot>
        </Group>

        <Collapse>
          <svg width="12" height="7" viewBox="0 0 12 7" fill="none" stroke="#666"><path d="M1 6.500l5-5 5 5" /></svg>
        </Collapse>
      </Ribbon>

      <FormulaBar>
        <NameBox>H7<Caret /></NameBox>
        <Grip>
          <svg width="3" height="13" viewBox="0 0 3 13" fill="#a8a8a8">
            <circle cx="1.500" cy="2" r="1.200" /><circle cx="1.500" cy="6.500" r="1.200" /><circle cx="1.500" cy="11" r="1.200" />
          </svg>
        </Grip>
        <FxBox>
          <FxSlot>
            <svg width="12" height="12" viewBox="0 0 12 12" fill="none" stroke="#c4c4c4" strokeWidth="1.300"><path d="M1 1l10 10M11 1L1 11" /></svg>
          </FxSlot>
          <FxSlot>
            <svg width="13" height="11" viewBox="0 0 13 11" fill="none" stroke="#c4c4c4" strokeWidth="1.800"><path d="M1 6l3.500 4L12 1" /></svg>
          </FxSlot>
          <FxSlot><Fx>fx</Fx></FxSlot>
        </FxBox>
        <FormulaInput>
          <svg width="9" height="6" viewBox="0 0 9 6" fill="none" stroke="#666" strokeWidth="1.500"><path d="M1 1l3.500 3.500L8 1" /></svg>
        </FormulaInput>
      </FormulaBar>

      <SheetArea>
        <Sheet />
        <VScroll>
          <ScrollBtn><Arrow dir="up" /></ScrollBtn>
          <VThumb />
          <VTrack />
          <ScrollBtn><Arrow dir="down" color="#555" /></ScrollBtn>
        </VScroll>
        <CellCursor>
          <svg width="13" height="13" viewBox="0 0 13 13" fill="#fff" stroke="#333">
            <path d="M4.500.5h4v4h4v4h-4v4h-4v-4h-4v-4h4z" />
          </svg>
        </CellCursor>
      </SheetArea>

      <TabsBar>
        <SheetNav>
          <Arrow dir="left" color="#c6c6c6" />
          <Arrow dir="right" color="#c6c6c6" />
        </SheetNav>
        <SheetTab>Sheet1</SheetTab>
        <AddSheet>+</AddSheet>
        <HScroll>
          <Dots />
          <HBtn><Arrow dir="left" color="#555" /></HBtn>
          <HThumb />
          <HTrack />
          <HBtn><Arrow dir="right" color="#555" /></HBtn>
        </HScroll>
      </TabsBar>

      <StatusBar>
        Ready
        <Stats>
          <span>Average: 127890</span>
          <span>Count: 2</span>
          <span>Sum: 127890</span>
        </Stats>
        <ViewBtn $on $ml={19}>
          <svg width="14" height="14" viewBox="0 0 14 14" fill="none" stroke="#8a8a8a">
            <path d="M.5.5h13v13H.5zM.5 4h13M.5 7h13M.5 10.500h13M4 .5v13M7 .5v13M10.500.5v13" />
          </svg>
        </ViewBtn>
        <ViewBtn>
          <svg width="14" height="14" viewBox="0 0 14 14" fill="none" stroke="#8a8a8a">
            <path d="M.5.5h13v13H.5zM4 3v8h6V3z" />
          </svg>
        </ViewBtn>
        <ViewBtn $mr={6}>
          <svg width="14" height="14" viewBox="0 0 14 14" fill="none" stroke="#8a8a8a">
            <path d="M.5 10.500V.5h3V8h7V.5h3v10zM.5 13.500h13" />
          </svg>
        </ViewBtn>
        <ZoomSign>−</ZoomSign>
        <ZoomBar><ZoomThumb /></ZoomBar>
        <ZoomSign>+</ZoomSign>
        <ZoomValue>190%</ZoomValue>
      </StatusBar>

      <Taskbar>
        <TaskBtn $w={48}><WinLogo /></TaskBtn>
        <TaskBtn $w={48}><SearchIcon /></TaskBtn>
        <TaskBtn $w={47}><TaskViewIcon /></TaskBtn>
        <TaskBtn $w={50} $ml={3}><EdgeIcon /></TaskBtn>
        <TaskBtn $w={50}><FolderIcon /></TaskBtn>
        <TaskBtn $w={50}><ChromeIcon /></TaskBtn>
        <TaskBtn $w={50}><SnipIcon /></TaskBtn>
        <TaskBtn $w={50} $active $open><ExcelIcon /></TaskBtn>
        <TaskBtn $w={50}><WordIcon /></TaskBtn>
        <TaskBtn $w={50} $open><ZoomIcon /></TaskBtn>
        <Tray>
          <CloudIcon />
          <Weather>9°C Mostly cloudy</Weather>
          <TraySlot $w={24}><TrayGlyph d="M3 11l6-6 6 6" /></TraySlot>
          <TraySlot $w={25}>
            <svg width="16" height="10" viewBox="0 0 16 10"><rect x="0" y="0" width="14" height="10" fill="none" stroke="#e8e8e8" /><rect x="1.500" y="1.500" width="10" height="7" fill="#e8e8e8" /><rect x="14.500" y="3" width="1.500" height="4" fill="#e8e8e8" /></svg>
          </TraySlot>
          <TraySlot $w={23}><TrayGlyph d="M1 6h3l4-4v12l-4-4H1zM10.500 5a4 4 0 0 1 0 6M13 3a7 7 0 0 1 0 10" /></TraySlot>
          <TraySlot $w={29}><TrayGlyph d="M2 15a12 12 0 0 1 13-13M5 15a9 9 0 0 1 10-10M8 15a6 6 0 0 1 7-7M11 15a3 3 0 0 1 4-4" /></TraySlot>
          <TraySlot $w={24}><KeyboardIcon /></TraySlot>
          <Lang>AZE</Lang>
          <Clock>
            <span>21:18</span>
            <span>17.12.2022</span>
          </Clock>
          <Notice><NoticeIcon /></Notice>
        </Tray>
      </Taskbar>
    </Window>
  );
}
